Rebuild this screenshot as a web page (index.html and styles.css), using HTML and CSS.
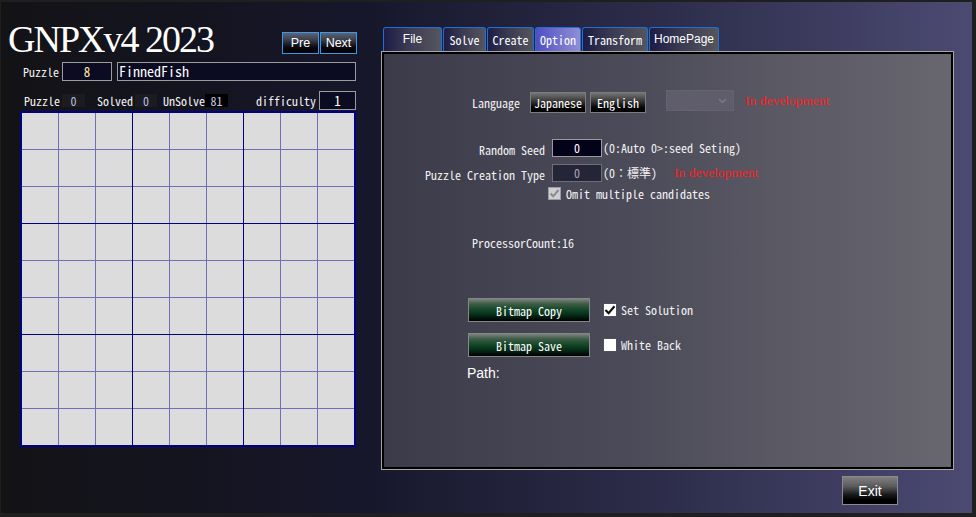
FILE: index.html
```html
<!DOCTYPE html>
<html lang="ja">
<head>
<meta charset="utf-8">
<title>GNPXv4 2023</title>
<link rel="stylesheet" href="styles.css">
</head>
<body>
<div class="window">
  <div class="left">
    <div class="head">
      <h1 class="title">GNPXv4 2023</h1>
      <div class="nav">
        <button class="nav-btn">Pre</button>
        <button class="nav-btn">Next</button>
      </div>
    </div>
    <div class="row1">
      <span class="lbl">Puzzle</span>
      <span class="numbox">8</span>
      <span class="namebox">FinnedFish</span>
    </div>
    <div class="row2">
      <span class="lbl">Puzzle</span>
      <span class="cnt cnt-a">0</span>
      <span class="lbl lbl-solved">Solved</span>
      <span class="cnt cnt-b">0</span>
      <span class="lbl lbl-unsolve">UnSolve</span>
      <span class="cnt cnt-c">81</span>
      <span class="lbl lbl-diff">difficulty</span>
      <span class="diffbox">1</span>
    </div>
    <div class="board">
      <div class="block"><i></i><i></i><i></i><i></i><i></i><i></i><i></i><i></i><i></i></div>
      <div class="block"><i></i><i></i><i></i><i></i><i></i><i></i><i></i><i></i><i></i></div>
      <div class="block"><i></i><i></i><i></i><i></i><i></i><i></i><i></i><i></i><i></i></div>
      <div class="block"><i></i><i></i><i></i><i></i><i></i><i></i><i></i><i></i><i></i></div>
      <div class="block"><i></i><i></i><i></i><i></i><i></i><i></i><i></i><i></i><i></i></div>
      <div class="block"><i></i><i></i><i></i><i></i><i></i><i></i><i></i><i></i><i></i></div>
      <div class="block"><i></i><i></i><i></i><i></i><i></i><i></i><i></i><i></i><i></i></div>
      <div class="block"><i></i><i></i><i></i><i></i><i></i><i></i><i></i><i></i><i></i></div>
      <div class="block"><i></i><i></i><i></i><i></i><i></i><i></i><i></i><i></i><i></i></div>
    </div>
  </div>

  <div class="right">
    <div class="tabs">
      <div class="tab tab-file sans">File</div>
      <div class="tab tab-solve">Solve</div>
      <div class="tab tab-create">Create</div>
      <div class="tab tab-option active">Option</div>
      <div class="tab tab-transform">Transform</div>
      <div class="tab tab-home sans">HomePage</div>
    </div>
    <div class="panel">
      <div class="opt-lang">
        <span class="plain">Language</span>
        <button class="gbtn btn-jp">Japanese</button>
        <button class="gbtn btn-en">English</button>
        <span class="combo"><svg width="9" height="6" viewBox="0 0 9 6"><path d="M1 1 L4.5 4.5 L8 1" fill="none" stroke="#7c7a8a" stroke-width="1.3"/></svg></span>
        <span class="dev dev-lang">In development</span>
      </div>
      <div class="opt-field opt-seed">
        <span class="flabel">Random Seed</span>
        <span class="input input-seed">0</span>
        <span class="plain hint">(0:Auto 0&gt;:seed Seting)</span>
      </div>
      <div class="opt-field opt-type">
        <span class="flabel">Puzzle Creation Type</span>
        <span class="input input-type">0</span>
        <span class="plain hint">(0：標準)</span>
        <span class="dev dev-type">In development</span>
      </div>
      <div class="opt-check">
        <span class="chk chk-disabled"><svg width="11" height="11" viewBox="0 0 11 11"><path d="M1.5 5.5 L4.2 8.3 L9.5 2" fill="none" stroke="#8c8c8c" stroke-width="2"/></svg></span>
        <span class="plain">Omit multiple candidates</span>
      </div>
      <div class="opt-proc plain">ProcessorCount:16</div>
      <div class="opt-bmp opt-copy">
        <button class="bbtn">Bitmap Copy</button>
        <span class="chk chk-on"><svg width="12" height="12" viewBox="0 0 12 12"><path d="M1.5 6 L4.6 9.2 L10.5 2.2" fill="none" stroke="#111" stroke-width="2.2"/></svg></span>
        <span class="plain">Set Solution</span>
      </div>
      <div class="opt-bmp opt-save">
        <button class="bbtn">Bitmap Save</button>
        <span class="chk chk-off"></span>
        <span class="plain">White Back</span>
      </div>
      <div class="opt-path">Path:</div>
    </div>
    <div class="footer">
      <button class="exit">Exit</button>
    </div>
  </div>
</div>
</body>
</html>
```

FILE: styles.css
```css
* { box-sizing: border-box; }

body {
  margin: 0;
  width: 976px;
  height: 517px;
  overflow: hidden;
  background: #1f1f1f;
  font-family: "Noto Sans Mono CJK JP", "DejaVu Sans Mono", monospace;
  font-size: 12px;
  color: #f2f2f2;
}

button {
  font: inherit;
  color: inherit;
  padding: 0;
  margin: 0;
  cursor: default;
}

.window {
  margin: 2px 0 0 1px;
  width: 971px;
  height: 511px;
  display: flex;
  background: linear-gradient(to right, #131316 0%, #141420 20%, #17172c 38%, #30304f 72%, #4c4a72 100%);
}

/* ---------- left column ---------- */
.left {
  width: 357px;
  flex: none;
  display: flex;
  flex-direction: column;
}

.head {
  display: flex;
  align-items: flex-start;
  height: 55px;
}

.title {
  margin: 18px 0 0 7px;
  font-family: "Liberation Serif", serif;
  font-weight: normal;
  font-size: 38px;
  line-height: 38px;
  letter-spacing: -2px;
  color: #fff;
}

.nav {
  margin: 30px 1px 0 auto;
  display: flex;
  gap: 1px;
}

.nav-btn {
  width: 37px;
  height: 22px;
  border: 1px solid #3a98e8;
  background: linear-gradient(#5c6474 0%, #3a3e4a 35%, #0a0a10 70%, #000 100%);
  font-family: "Liberation Sans", sans-serif;
  font-size: 12.5px;
  color: #fff;
}

.row1 {
  display: flex;
  align-items: center;
  height: 19px;
  margin-top: 5px;
  padding-left: 22px;
}

.lbl { line-height: 14px; white-space: nowrap; }

.numbox {
  margin-left: 3px;
  width: 50px;
  height: 19px;
  border: 1px solid #9c9c9c;
  background: #0b0b22;
  color: #ffe6a0;
  text-align: center;
  line-height: 17px;
  font-size: 13px;
}

.namebox {
  margin-left: 5px;
  width: 239px;
  height: 19px;
  border: 1px solid #9c9c9c;
  background: #0b0b22;
  padding-left: 1px;
  font-size: 14px;
  line-height: 17px;
  color: #fff;
}

.row2 {
  display: flex;
  align-items: center;
  height: 19px;
  margin-top: 10px;
  padding-left: 23px;
}

.cnt {
  height: 13px;
  line-height: 13px;
  text-align: center;
  color: #b8bee0;
}
.cnt-a { margin-left: 2px; width: 23px; background: #1b1b20; }
.lbl-solved { margin-left: 12px; }
.cnt-b { margin-left: 2px; width: 22px; background: #1b1b22; }
.lbl-unsolve { margin-left: 6px; }
.cnt-c { width: 23px; background: #000; color: #c8cce8; }
.lbl-diff { margin-left: 28px; }

.diffbox {
  margin-left: 3px;
  width: 37px;
  height: 19px;
  border: 1px solid #9c9c9c;
  background: #0b0b22;
  text-align: center;
  line-height: 17px;
  font-size: 13px;
  color: #fff;
}

.board {
  margin: 1px 0 0 19px;
  width: 336px;
  height: 336px;
  border: 2px solid #000088;
  background: #000088;
  display: grid;
  grid-template-columns: repeat(3, 110px);
  grid-template-rows: repeat(3, 110px);
  gap: 1px;
}

.block {
  display: grid;
  grid-template-columns: repeat(3, 36px);
  grid-template-rows: repeat(3, 36px);
  gap: 1px;
  background: #7070b8;
}

.block i { background: #dcdcdc; }

/* ---------- right column ---------- */
.right {
  width: 614px;
  flex: none;
  display: flex;
  flex-direction: column;
  padding-left: 23px;
}

.tabs {
  display: flex;
  gap: 1px;
  margin: 25px 0 0 2px;
  height: 24px;
}

.tab {
  height: 24px;
  border: 1px solid #1f70d6;
  border-bottom: none;
  border-radius: 3px 3px 0 0;
  background: linear-gradient(to right, #1c1c46 0%, #3a3a52 45%, #55555d 100%);
  color: #fff;
  display: flex;
  align-items: center;
  justify-content: center;
  padding-bottom: 1px;
}
.tab.sans { font-family: "Liberation Sans", sans-serif; font-size: 12px; }
.tab-file { width: 59px; background: linear-gradient(to right, #1c1c48 0%, #3c3c54 45%, #56565e 100%); }
.tab-solve { width: 43px; }
.tab-create { width: 47px; }
.tab-option { width: 46px; }
.tab-transform { width: 66px; }
.tab-home { width: 70px; }
.tab.active { background: linear-gradient(to right, #4e4ec4 0%, #7070cc 50%, #8e8ed8 100%); }

.panel {
  width: 573px;
  height: 419px;
  border: 1px solid #a6a6a6;
  padding: 2px;
  box-shadow: inset 0 0 0 2px #000;
  background: linear-gradient(to right, #3c3b4a 0%, #4c4b59 45%, #5a5964 70%, #68666f 100%);
  display: flex;
  flex-direction: column;
}

.plain { white-space: nowrap; line-height: 14px; }

.opt-lang {
  margin-top: 36px;
  height: 25px;
  padding-left: 88px;
  display: flex;
  align-items: center;
}

.gbtn {
  height: 21px;
  width: 56px;
  border: 1px solid #7c7c7c;
  background: linear-gradient(#747474 0%, #3c3c3c 40%, #060606 75%, #000 100%);
  color: #fff;
}
.btn-jp { margin-left: 10px; }
.btn-en { margin-left: 4px; }

.combo {
  align-self: flex-start;
  margin-left: 20px;
  width: 68px;
  height: 21px;
  background: #5f5d6b;
  border: 1px solid #646271;
  display: flex;
  align-items: center;
  justify-content: flex-end;
  padding-right: 6px;
}

.dev {
  font-family: "Liberation Serif", serif;
  font-size: 13.5px;
  line-height: 14px;
  color: #ff1e1e;
  white-space: nowrap;
}
.dev-lang { margin-left: 11px; margin-top: -3px; }

.opt-field {
  display: flex;
  align-items: center;
  height: 18px;
}
.opt-seed { margin-top: 24px; }
.opt-type { margin-top: 7px; }

.flabel {
  width: 161px;
  text-align: right;
  white-space: nowrap;
  line-height: 14px;
  padding-top: 3px;
}

.input {
  margin-left: 7px;
  width: 50px;
  height: 18px;
  border: 1px solid #9a9a9a;
  text-align: center;
  line-height: 16px;
}
.input-seed { background: #02021a; color: #fff; }
.input-type { background: #252538; color: #a8a8b4; border-color: #6e6e7a; }

.hint { margin-left: 1px; }
.dev-type { margin-left: 17px; }

.opt-check {
  margin-top: 5px;
  height: 13px;
  padding-left: 164px;
  display: flex;
  align-items: center;
}

.chk {
  flex: none;
  display: flex;
  align-items: center;
  justify-content: center;
}
.chk-disabled {
  width: 13px;
  height: 13px;
  background: #cfcfd2;
  border: 1px solid #9a9aa2;
  margin-right: 5px;
}
.chk-on, .chk-off {
  width: 14px;
  height: 14px;
  background: #fff;
  border: 1px solid #505058;
  margin-left: 13px;
  margin-right: 4px;
}

.opt-proc {
  margin-top: 36px;
  padding-left: 88px;
}

.opt-bmp {
  display: flex;
  align-items: center;
  height: 24px;
  padding-left: 84px;
}
.opt-copy { margin-top: 48px; }
.opt-save { margin-top: 11px; }

.bbtn {
  width: 122px;
  height: 24px;
  border: 1px solid #868686;
  background: linear-gradient(#7b847e 0%, #3f5c48 22%, #174a2a 45%, #06301a 70%, #000 100%);
  color: #fff;
}

.opt-path {
  margin-top: 8px;
  padding-left: 83px;
  font-family: "Liberation Sans", sans-serif;
  font-size: 14px;
  line-height: 16px;
  color: #fff;
}

.footer {
  margin-top: 6px;
  padding-left: 461px;
}

.exit {
  width: 56px;
  height: 29px;
  border: 1px solid #8a8a8a;
  background: linear-gradient(#808080 0%, #5a5a5a 35%, #1a1a1a 65%, #000 85%);
  font-family: "Liberation Sans", sans-serif;
  font-size: 14px;
  color: #fff;
}
```
